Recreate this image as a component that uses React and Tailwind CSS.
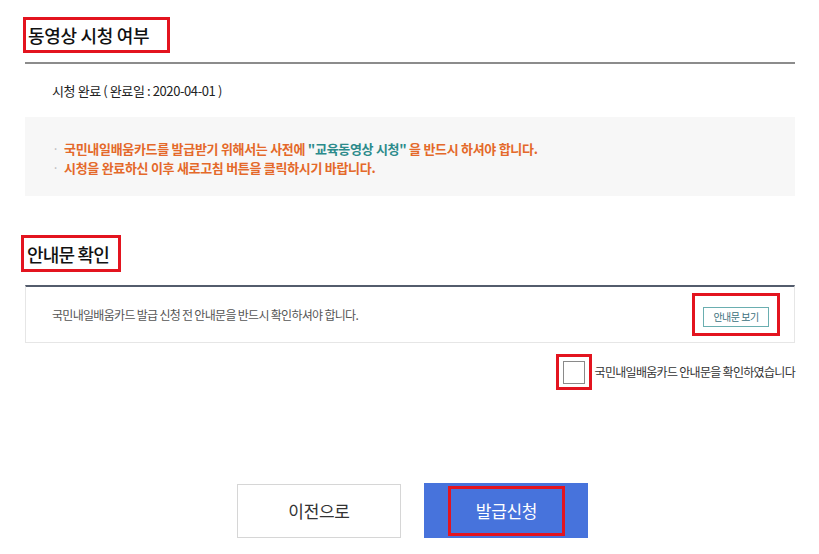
export default function App() {
  const font = { fontFamily: '"Noto Sans CJK KR", "Noto Sans", sans-serif' }

  return (
    <div className="w-[819px] h-[554px] bg-white text-[#222] overflow-hidden" style={font}>
      <div className="w-[770px] ml-[25px] pt-[17px]">
        {/* 동영상 시청 여부 */}
        <div className="-ml-[2px] inline-flex items-center h-[36px] w-[147px] border-[3px] border-[#e3141f] pl-[2px]">
          <h2 className="text-[18px] font-medium leading-none tracking-[-0.3px] text-[#111]">동영상 시청 여부</h2>
        </div>
        <div className="mt-[9px] h-[2px] bg-[#8c8c8c]" />
        <p className="mt-[18px] pl-[27px] text-[13px] leading-[18px] tracking-[-0.4px] text-[#222]">
          시청 완료 ( 완료일 : 2020-04-01 )
        </p>

        <div className="mt-[17px] h-[79px] bg-[#f7f7f7] pt-[22px] pl-[27px] text-[13px] leading-[19px] font-bold tracking-[-0.3px] text-[#e4692a]">
          <p>
            <span className="text-[#bbb] font-normal mr-[5px]">·</span>
            국민내일배움카드를 발급받기 위해서는 사전에 <span className="text-[#2c8b8b]">"교육동영상 시청"</span> 을 반드시 하셔야 합니다.
          </p>
          <p>
            <span className="text-[#bbb] font-normal mr-[5px]">·</span>
            시청을 완료하신 이후 새로고침 버튼을 클릭하시기 바랍니다.
          </p>
        </div>

        {/* 안내문 확인 */}
        <div className="mt-[39px] -ml-[4px] inline-flex items-center h-[37px] w-[100px] border-[3px] border-[#e3141f] pl-[3px]">
          <h2 className="text-[18px] font-medium leading-none tracking-[-0.8px] text-[#111]">안내문 확인</h2>
        </div>
        <div className="mt-[13px] h-[58px] border-t-2 border-t-[#535c6c] border-x border-b border-[#e6e6e6] flex items-center justify-between pl-[26px] pr-[14px]">
          <p className="text-[12px] tracking-[-0.7px] text-[#555]">
            국민내일배움카드 발급 신청 전 안내문을 반드시 확인하셔야 합니다.
          </p>
          <div className="border-[3px] border-[#e3141f] px-[8px] py-[6px]">
            <button className="w-[66px] h-[20px] border border-[#6aaeb0] text-[10px] tracking-[-0.5px] text-[#3b6f7c] leading-none bg-white">
              안내문 보기
            </button>
          </div>
        </div>

        <div className="mt-[11px] flex items-center justify-end">
          <div className="w-[36px] h-[36px] border-[3px] border-[#e3141f] flex items-center justify-center">
            <div className="w-[22px] h-[23px] border border-[#8a8a8a] bg-white" />
          </div>
          <span className="ml-[3px] text-[12px] tracking-[-0.7px] text-[#333]">국민내일배움카드 안내문을 확인하였습니다</span>
        </div>

        {/* 버튼 */}
        <div className="mt-[94px] flex justify-center gap-[23px] pl-[5px]">
          <button className="w-[164px] h-[54px] border border-[#d6d6d6] bg-white text-[17px] tracking-[-0.3px] text-[#333]">
            이전으로
          </button>
          <div className="w-[164px] h-[55px] -mt-[1px] bg-[#4773dc] flex justify-center pt-[3px] pl-[1px]">
            <div className="w-[117px] h-[50px] border-[3px] border-[#e3141f] flex items-center justify-center text-[17px] tracking-[-0.3px] text-white">
              발급신청
            </div>
          </div>
        </div>
      </div>
    </div>
  )
}
